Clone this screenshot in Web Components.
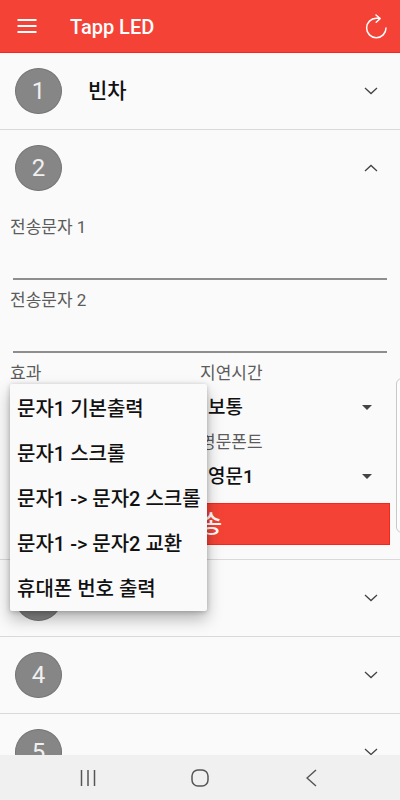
<!DOCTYPE html>
<html lang="ko">
<head>
<meta charset="utf-8">
<meta name="viewport" content="width=device-width, initial-scale=1">
<title>Tapp LED</title>
<style>
  body {
    margin: 0;
    background: #fafafa;
    color: #111;
    font-family: Roboto, "Noto Sans CJK KR", sans-serif;
  }
</style>
</head>
<body>
<led-app></led-app>

<script>
class AppHeader extends HTMLElement {
  constructor() {
    super();
    this.attachShadow({ mode: 'open' });
    this.shadowRoot.innerHTML = `
      <style>
        :host {
          display: flex;
          align-items: center;
          flex: none;
          box-sizing: border-box;
          height: 53px;
          padding: 0 8px;
          gap: 24px;
          background: #f44336;
          border-bottom: 1px solid #f8261a;
          color: #fff;
        }
        h1 {
          flex: 1;
          margin: 0;
          padding-top: 2px;
          font-size: 20px;
          line-height: 24px;
          font-weight: 500;
        }
        button {
          display: grid;
          place-items: center;
          width: 38px;
          height: 40px;
          padding: 0;
          border: 0;
          background: none;
          color: inherit;
        }
        button.reload { width: 32px; }
        svg {
          display: block;
          fill: none;
          stroke: currentColor;
        }
      </style>
      <button type="button" aria-label="메뉴">
        <svg width="20" height="14" viewBox="0 0 20 14" stroke-width="2"><path d="M.5 1h19M.5 7h19M.5 13h19"/></svg>
      </button>
      <h1><slot></slot></h1>
      <button class="reload" type="button" aria-label="새로고침">
        <svg width="24" height="26" viewBox="0 0 24 26" stroke-width="1.5" stroke-linecap="round" stroke-linejoin="round">
          <path d="M22 15A9.700 9.700 0 1 1 12.300 5.300h3.200M12 2l4.200 3.500-4 3.800"/>
        </svg>
      </button>
    `;
  }
}

class MessageRow extends HTMLElement {
  constructor() {
    super();
    this.attachShadow({ mode: 'open' });
  }

  connectedCallback() {
    this.render();
    this.shadowRoot.addEventListener('click', (event) => {
      if (event.target.closest('.head')) {
        this.toggleAttribute('open');
        this.render();
      }
    });
  }

  render() {
    const open = this.hasAttribute('open');
    const number = this.getAttribute('number');
    const name = this.getAttribute('name') || '';
    this.shadowRoot.innerHTML = `
      <style>
        :host {
          display: block;
          flex: none;
          border-bottom: 1px solid #d9d9d9;
        }
        .head {
          display: flex;
          align-items: center;
          gap: 26px;
          width: 100%;
          height: 76px;
          padding: 0 22px 0 15px;
          border: 0;
          background: none;
          color: inherit;
          font: 500 21px/28px Roboto, "Noto Sans CJK KR", sans-serif;
          text-align: left;
        }
        .number {
          display: grid;
          place-items: center;
          flex: none;
          box-sizing: border-box;
          width: 47px;
          height: 46px;
          border: 1px solid #747474;
          border-radius: 50%;
          background: #868686;
          color: #f0f0f0;
          font-size: 24px;
          font-weight: 400;
        }
        .name { flex: 1; }
        svg {
          fill: none;
          stroke: #444;
          stroke-width: 1.3;
        }
        .body { padding: 10px 10px 14px; }
        .body[hidden] { display: none; }
      </style>
      <button class="head" type="button" aria-expanded="${open}" aria-label="${number} ${name}">
        <span class="number">${number}</span>
        <span class="name">${name}</span>
        <svg width="14" height="8" viewBox="0 0 14 8"><path d="${open ? 'M1 7l6-5.5L13 7' : 'M1 1l6 5.5L13 1'}"/></svg>
      </button>
      <div class="body" ${open ? '' : 'hidden'}><slot></slot></div>
    `;
  }
}

class TextField extends HTMLElement {
  constructor() {
    super();
    this.attachShadow({ mode: 'open' });
    this.shadowRoot.innerHTML = `
      <style>
        :host { display: block; }
        label {
          display: block;
          font-size: 17px;
          line-height: 22px;
          color: #5c5c5c;
        }
        input {
          display: block;
          box-sizing: border-box;
          width: calc(100% - 6px);
          height: 42px;
          margin: 0 3px;
          padding: 0 4px;
          border: 0;
          border-bottom: 2px solid #8e8e8e;
          background: none;
          font: inherit;
          outline: none;
        }
      </style>
      <label for="text"><slot></slot></label>
      <input id="text" type="text">
    `;
  }
}

class SelectField extends HTMLElement {
  constructor() {
    super();
    this.attachShadow({ mode: 'open' });
  }

  connectedCallback() {
    const options = this.getAttribute('options').split('|');
    this.shadowRoot.innerHTML = `
      <style>
        :host {
          display: block;
          position: relative;
        }
        label {
          display: block;
          font-size: 17px;
          line-height: 22px;
          color: #5c5c5c;
        }
        .box {
          display: grid;
          align-items: center;
        }
        select, svg { grid-area: 1 / 1; }
        select {
          width: 100%;
          height: 47px;
          padding: 0 24px 0 8px;
          border: 0;
          background: none;
          color: inherit;
          font: 500 19px/28px Roboto, "Noto Sans CJK KR", sans-serif;
          appearance: none;
        }
        svg {
          justify-self: end;
          margin-right: 18px;
          fill: #444;
          pointer-events: none;
        }
      </style>
      <label for="choice">${this.getAttribute('label')}</label>
      <div class="box">
        <select id="choice">${options.map((text) => `<option>${text}</option>`).join('')}</select>
        <svg width="10" height="5" viewBox="0 0 10 5"><path d="M0 0h10L5 5z"/></svg>
      </div>
      <slot></slot>
    `;
  }
}

class OptionMenu extends HTMLElement {
  constructor() {
    super();
    this.attachShadow({ mode: 'open' });
  }

  connectedCallback() {
    const options = this.getAttribute('options').split('|');
    this.shadowRoot.innerHTML = `
      <style>
        /* drops over the select it belongs to */
        :host {
          position: absolute;
          z-index: 2;
          top: 22px;
          left: 0;
          box-sizing: border-box;
          min-width: 197px;
          padding-top: 2px;
          border-radius: 2px;
          background: #fafafa;
          box-shadow: 0 8px 16px rgba(0, 0, 0, .28), 0 1px 5px rgba(0, 0, 0, .22);
        }
        button {
          display: block;
          width: 100%;
          height: 45px;
          padding: 0 6px 0 7px;
          border: 0;
          background: none;
          color: inherit;
          font: 500 20px/28px Roboto, "Noto Sans CJK KR", sans-serif;
          text-align: left;
          white-space: nowrap;
        }
      </style>
      <div role="listbox" aria-label="효과">
        ${options.map((text) => `<button type="button" role="option">${text}</button>`).join('')}
      </div>
    `;
    this.shadowRoot.addEventListener('click', () => this.remove());
  }
}

class MessageForm extends HTMLElement {
  constructor() {
    super();
    this.attachShadow({ mode: 'open' });
    const effects = '문자1 기본출력|문자1 스크롤|문자1 -> 문자2 스크롤|문자1 -> 문자2 교환|휴대폰 번호 출력';
    this.shadowRoot.innerHTML = `
      <style>
        :host { display: block; }
        .texts {
          display: grid;
          gap: 9px;
        }
        .options {
          display: grid;
          grid-template-columns: 1fr 1fr;
          margin: 9px 0 3px;
        }
        .send {
          display: block;
          width: 100%;
          height: 42px;
          padding: 0;
          border: 1px solid #f8261a;
          background: #f44336;
          color: #fff;
          font: 500 24px/28px Roboto, "Noto Sans CJK KR", sans-serif;
        }
      </style>
      <div class="texts">
        <text-field>전송문자 1</text-field>
        <text-field>전송문자 2</text-field>
      </div>
      <div class="options">
        <select-field label="효과" options="${effects}">
          <option-menu options="${effects}"></option-menu>
        </select-field>
        <select-field label="지연시간" options="보통"></select-field>
        <select-field label="한글폰트" options="한글1"></select-field>
        <select-field label="영문폰트" options="영문1"></select-field>
      </div>
      <button class="send" type="button">전송</button>
    `;
  }
}

class NavBar extends HTMLElement {
  constructor() {
    super();
    this.attachShadow({ mode: 'open' });
    this.shadowRoot.innerHTML = `
      <style>
        :host {
          display: flex;
          flex: none;
          justify-content: center;
          height: 45px;
          background: #f0f0f0;
        }
        button {
          display: grid;
          place-items: center;
          width: 28%;
          padding: 0;
          border: 0;
          background: none;
        }
        svg {
          fill: none;
          stroke: #555;
          stroke-width: 1.5;
        }
      </style>
      <button type="button" aria-label="최근 앱">
        <svg width="16" height="18" viewBox="0 0 16 18"><path d="M1.500 1v16M8 1v16M14.500 1v16"/></svg>
      </button>
      <button type="button" aria-label="홈">
        <svg width="18" height="18" viewBox="0 0 18 18"><rect x="1" y="1" width="16" height="16" rx="6"/></svg>
      </button>
      <button type="button" aria-label="뒤로">
        <svg width="12" height="18" viewBox="0 0 12 18"><path d="M10 1L1 9l9 8"/></svg>
      </button>
    `;
  }
}

class LedApp extends HTMLElement {
  constructor() {
    super();
    this.attachShadow({ mode: 'open' });
    this.shadowRoot.innerHTML = `
      <style>
        :host {
          display: flex;
          flex-direction: column;
          height: 100vh;
          position: relative;
          overflow: hidden;
        }
        main {
          display: flex;
          flex-direction: column;
          flex: 1;
          min-height: 0;
          overflow: hidden;
        }
        /* edge panel handle, floats over the list */
        .handle {
          position: absolute;
          top: 378px;
          right: -8px;
          box-sizing: border-box;
          width: 12px;
          height: 155px;
          border: 1px solid #c8c8c8;
          border-radius: 6px;
          background: #fdfdfd;
        }
      </style>
      <app-header>Tapp LED</app-header>
      <main>
        <message-row number="1" name="빈차"></message-row>
        <message-row number="2" open><message-form></message-form></message-row>
        <message-row number="3"></message-row>
        <message-row number="4"></message-row>
        <message-row number="5"></message-row>
      </main>
      <div class="handle"></div>
      <nav-bar></nav-bar>
    `;
  }
}

customElements.define('app-header', AppHeader);
customElements.define('text-field', TextField);
customElements.define('option-menu', OptionMenu);
customElements.define('select-field', SelectField);
customElements.define('message-form', MessageForm);
customElements.define('message-row', MessageRow);
customElements.define('nav-bar', NavBar);
customElements.define('led-app', LedApp);
</script>
</body>
</html>
